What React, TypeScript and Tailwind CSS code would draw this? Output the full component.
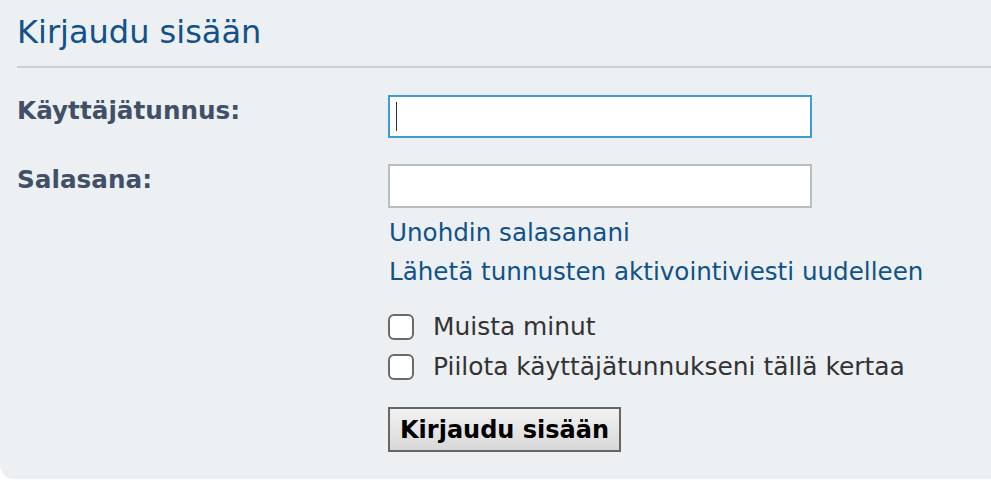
import React from 'react';

const App: React.FC = () => {
    return (
        <div className="w-[991px] h-[481px] bg-white overflow-hidden" style={{ fontFamily: '"DejaVu Sans", Verdana, sans-serif' }}>
            <div className="w-[1010px] h-[479px] bg-[#ecf0f3] rounded-bl-[14px] pt-[12px] pl-[17px]">
                <h2 className="text-[32px] leading-[40px] text-[#105289] font-normal">Kirjaudu sisään</h2>
                <div className="mt-[14px] border-t-2 border-[#ccd0d3]" />

                <div className="mt-[27px] flex">
                    <label className="w-[371px] pt-[1px] font-bold text-[24.7px] leading-[30px] text-[#425067]">Käyttäjätunnus:</label>
                    <div className="w-[424px] h-[43px] border-2 border-[#3d9fcf] bg-white flex items-center pl-[6px]">
                        <span className="w-[1px] h-[29px] bg-[#333]" />
                    </div>
                </div>

                <div className="mt-[26px] flex">
                    <label className="w-[371px] pt-[1px] font-bold text-[24.7px] leading-[30px] text-[#425067]">Salasana:</label>
                    <div className="flex flex-col">
                        <div className="w-[424px] h-[44px] border-2 border-[#b9bdc1] bg-white" />
                        <a className="mt-[5px] pl-[1px] text-[24.6px] leading-[39px] text-[#105289]">Unohdin salasanani</a>
                        <a className="pl-[1px] text-[24.6px] leading-[39px] text-[#105289]">Lähetä tunnusten aktivointiviesti uudelleen</a>

                        <div className="mt-[23px] flex flex-col gap-[14px]">
                            <label className="flex items-center gap-[19px] h-[26px]">
                                <span className="w-[26px] h-[26px] rounded-[6px] border-2 border-[#6a6a6a] bg-white" />
                                <span className="text-[24.9px] text-[#333]">Muista minut</span>
                            </label>
                            <label className="flex items-center gap-[19px] h-[26px]">
                                <span className="w-[26px] h-[26px] rounded-[6px] border-2 border-[#6a6a6a] bg-white" />
                                <span className="text-[24.9px] text-[#333]">Piilota käyttäjätunnukseni tällä kertaa</span>
                            </label>
                        </div>

                        <button className="mt-[27px] self-start h-[45px] px-[10px] border-2 border-[#666] bg-gradient-to-b from-[#f2f2f2] to-[#d8d8d8] font-bold text-[24px] leading-[30px] text-black">
                            Kirjaudu sisään
                        </button>
                    </div>
                </div>
            </div>
        </div>
    );
};

export default App;
